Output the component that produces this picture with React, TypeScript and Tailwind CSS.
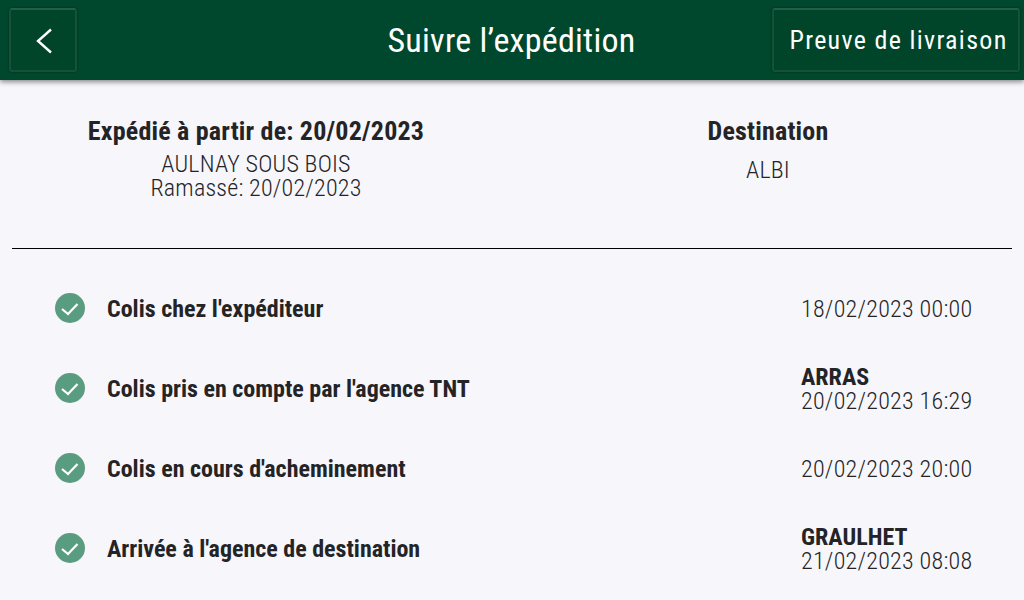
import React from 'react';

const STEPS = [
  { label: 'Colis chez l\'expéditeur', date: '18/02/2023 00:00' },
  { label: 'Colis pris en compte par l\'agence TNT', place: 'ARRAS', date: '20/02/2023 16:29' },
  { label: 'Colis en cours d\'acheminement', date: '20/02/2023 20:00' },
  { label: 'Arrivée à l\'agence de destination', place: 'GRAULHET', date: '21/02/2023 08:08' },
];

const btn =
  'h-[64px] flex items-center justify-center rounded-[3px] bg-[#00452a] border-2 border-[#14533a] border-t-[#23604a] shadow-[0_0_3px_rgba(0,0,0,0.4)]';

const App: React.FC = () => {
  return (
    <div className="w-[1024px] h-[600px] overflow-hidden bg-[#f6f6fb] text-[#242426] font-['Roboto',sans-serif] [font-stretch:75%]">
      {/* Header */}
      <header className="relative h-[80px] bg-[#00482d] shadow-[0_2px_5px_rgba(0,0,0,0.45)] grid grid-cols-[1fr_auto_1fr] items-center pl-[9px] pr-[4px]">
        <button className={`${btn} w-[68px] justify-self-start`}>
          <svg width="24" height="28" viewBox="0 0 24 28" fill="none" stroke="#fff" strokeWidth="2.4">
            <path d="M20 3.5 L7 15 L20 26.5" />
          </svg>
        </button>
        <h1 className="text-[34px] text-white tracking-[0.25px] pr-[6px]">Suivre l’expédition</h1>
        <button className={`${btn} w-[248px] justify-self-end pl-[5px] text-[26px] text-white tracking-[1.3px]`}>
          Preuve de livraison
        </button>
      </header>

      {/* Origin / destination */}
      <div className="flex h-[169px] border-b border-black mx-[12px] text-[24px] font-light tracking-[0.2px]">
        <div className="w-[488px] pt-[36px] text-center leading-[24px]">
          <div className="text-[26px] leading-[30px] font-bold">Expédié à partir de: 20/02/2023</div>
          <div className="mt-[6px]">AULNAY SOUS BOIS</div>
          <div>Ramassé: 20/02/2023</div>
        </div>
        <div className="flex-1 pl-[24px] pt-[36px] text-center">
          <div className="text-[26px] leading-[30px] font-bold">Destination</div>
          <div className="mt-[12px] leading-[24px]">ALBI</div>
        </div>
      </div>

      {/* Steps */}
      <div className="pt-[20px] pl-[55px] pr-[52px]">
        {STEPS.map((s) => (
          <div key={s.label} className="h-[80px] flex items-center justify-between">
            <div className="flex items-center gap-[22px]">
              <span className="w-[30px] h-[30px] mb-[2px] rounded-full bg-[#5a9c80] flex items-center justify-center">
                <svg width="20" height="16" viewBox="0 0 20 16" fill="none" stroke="#fff" strokeWidth="2.2">
                  <path d="M2 9 L8 14 L17.5 4" />
                </svg>
              </span>
              <span className="text-[24px] font-bold">{s.label}</span>
            </div>
            <div className="w-[171px] text-[24px] leading-[24px] font-light tracking-[0.25px] whitespace-nowrap">
              {s.place && <div className="font-bold tracking-normal">{s.place}</div>}
              <div>{s.date}</div>
            </div>
          </div>
        ))}
      </div>
    </div>
  );
};

export default App;
